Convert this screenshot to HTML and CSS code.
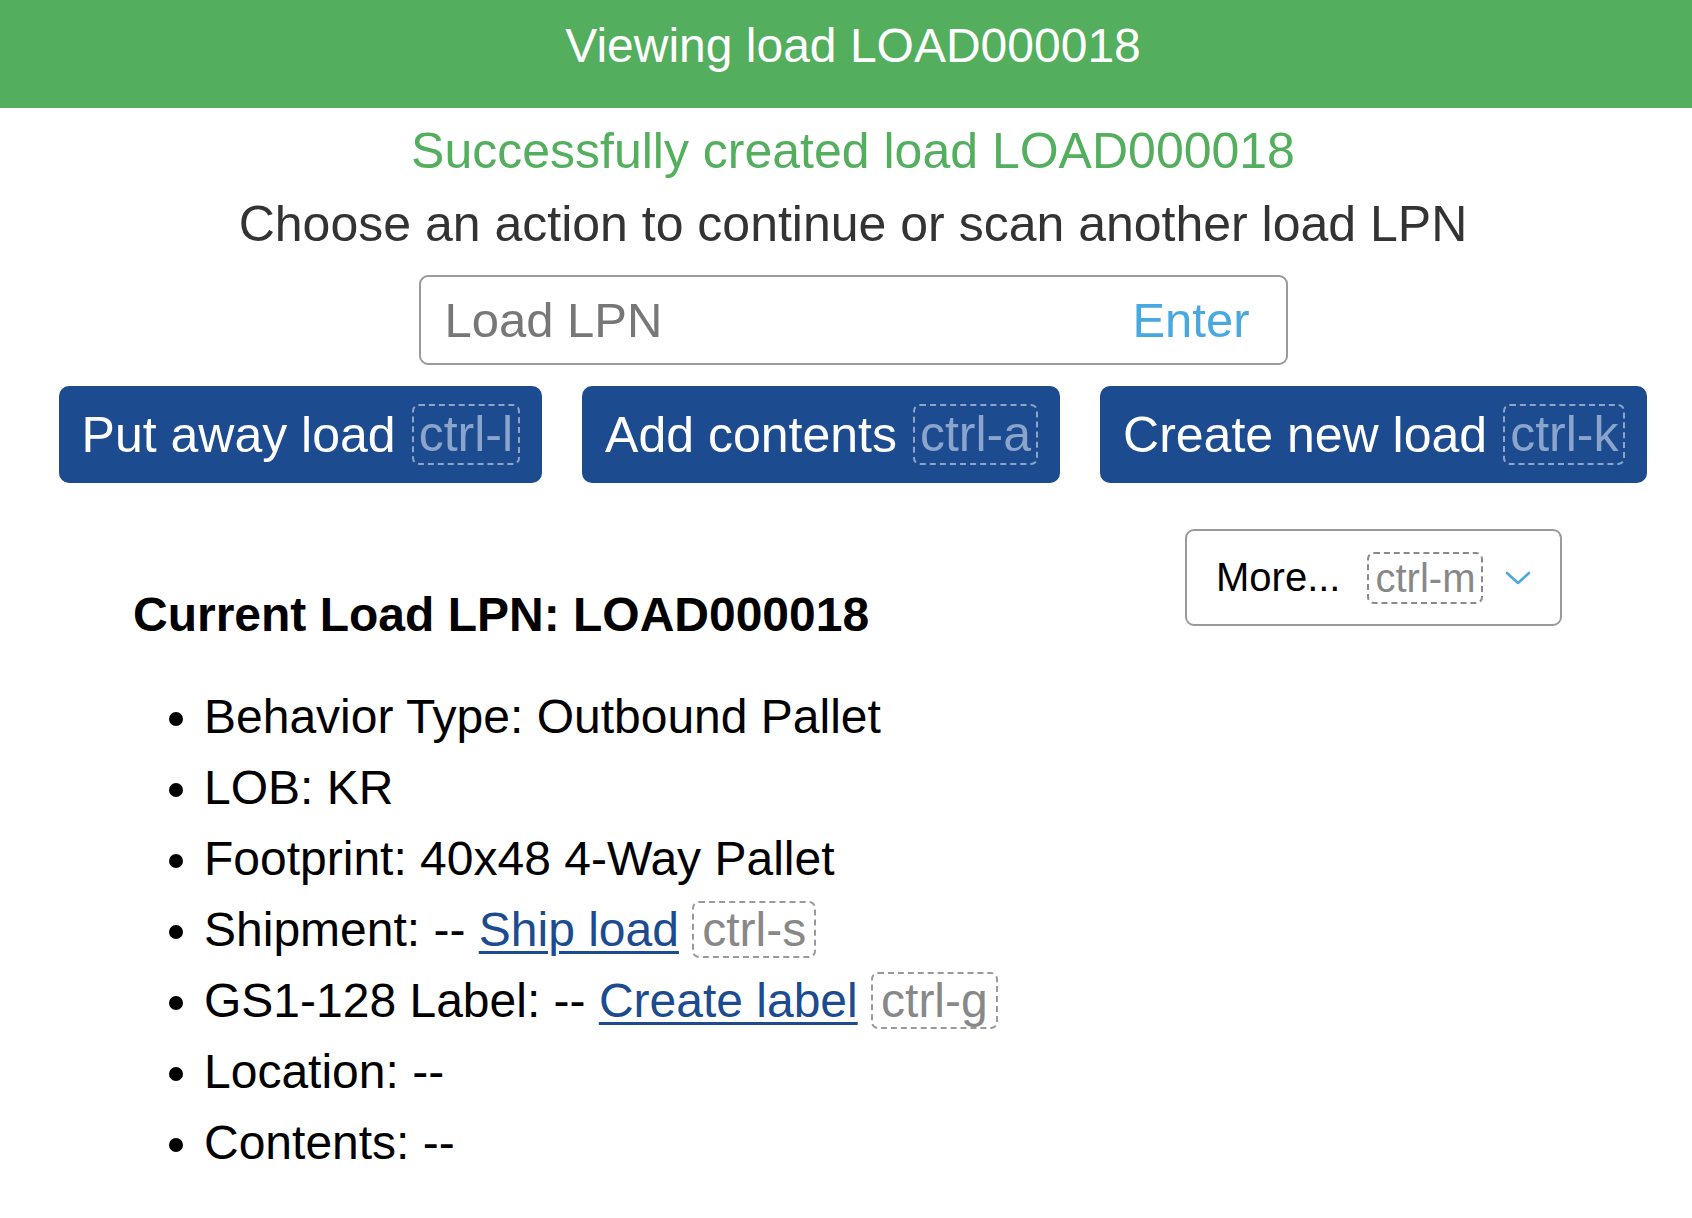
FILE: index.html
```html
<!DOCTYPE html>
<html lang="en">
<head>
<meta charset="utf-8">
<title>Viewing load LOAD000018</title>
<link rel="stylesheet" href="styles.css">
</head>
<body>
<header class="topbar">
  <h1 class="topbar-title">Viewing load LOAD000018</h1>
</header>
<main class="app">
  <section class="intro">
    <p class="success">Successfully created load LOAD000018</p>
    <p class="prompt">Choose an action to continue or scan another load LPN</p>
    <div class="scan-field">
      <span class="scan-placeholder">Load LPN</span>
      <span class="scan-enter">Enter</span>
    </div>
    <div class="actions">
      <button class="action-btn" type="button"><span>Put away load</span><kbd class="hotkey">ctrl-l</kbd></button>
      <button class="action-btn" type="button"><span>Add contents</span><kbd class="hotkey">ctrl-a</kbd></button>
      <button class="action-btn" type="button"><span>Create new load</span><kbd class="hotkey">ctrl-k</kbd></button>
    </div>
  </section>
  <section class="details">
    <div class="details-head">
      <h2 class="details-title">Current Load LPN: LOAD000018</h2>
      <div class="more">
        <span class="more-label">More...</span>
        <kbd class="more-key">ctrl-m</kbd>
        <svg class="chevron" width="26" height="16" viewBox="0 0 26 16" aria-hidden="true"><path d="M2 3 L13 13 L24 3" fill="none" stroke="#4aa8e0" stroke-width="2.6" stroke-linecap="round" stroke-linejoin="round"/></svg>
      </div>
    </div>
    <ul class="facts">
      <li>Behavior Type: Outbound Pallet</li>
      <li>LOB: KR</li>
      <li>Footprint: 40x48 4-Way Pallet</li>
      <li>Shipment: -- <a href="#" class="link">Ship load</a> <kbd class="key">ctrl-s</kbd></li>
      <li>GS1-128 Label: -- <a href="#" class="link">Create label</a> <kbd class="key">ctrl-g</kbd></li>
      <li>Location: --</li>
      <li>Contents: --</li>
    </ul>
  </section>
</main>
</body>
</html>
```

FILE: styles.css
```css
* { box-sizing: border-box; }

html, body {
  margin: 0;
  padding: 0;
  background: #ffffff;
  font-family: "Liberation Sans", Arial, Helvetica, sans-serif;
  color: #000;
}

.topbar {
  background: #53ae5d;
  height: 108px;
  padding: 17px 0 0 14px;
}

.topbar-title {
  margin: 0;
  font-size: 48px;
  font-weight: 400;
  line-height: 58px;
  color: #ffffff;
  text-align: center;
}

.intro {
  padding-left: 14px;
  display: flex;
  flex-direction: column;
  align-items: center;
}

.success {
  margin: 13px 0 0;
  font-size: 50px;
  line-height: 60px;
  color: #53ae5d;
}

.prompt {
  margin: 13px 0 0;
  font-size: 50px;
  line-height: 60px;
  color: #333333;
}

.scan-field {
  margin-top: 21px;
  width: 869px;
  height: 90px;
  border: 2px solid #9a9a9a;
  border-radius: 9px;
  display: flex;
  align-items: center;
  justify-content: space-between;
  padding: 0 36px 0 24px;
  font-size: 49px;
}

.scan-placeholder { color: #777777; }
.scan-enter { color: #4aa8e0; }

.actions {
  margin-top: 21px;
  display: flex;
  gap: 40px;
  justify-content: center;
}

.action-btn {
  height: 97px;
  border: 0;
  border-radius: 10px;
  background: #1d4b8f;
  color: #ffffff;
  font-family: inherit;
  font-size: 50px;
  padding: 0 22px 0 23px;
  display: flex;
  align-items: center;
  white-space: nowrap;
  cursor: pointer;
}

.hotkey {
  font-family: inherit;
  font-size: 50px;
  line-height: 57px;
  margin-left: 16px;
  padding: 0 5px;
  border: 2px dashed rgba(255, 255, 255, 0.5);
  border-radius: 7px;
  color: #8ba4cc;
}

.details {
  padding: 46px 130px 0 133px;
}

.details-head {
  display: flex;
  justify-content: space-between;
  align-items: flex-start;
}

.details-title {
  margin: 58px 0 0;
  font-size: 48px;
  line-height: 56px;
  font-weight: 700;
}

.more {
  flex-shrink: 0;
  width: 377px;
  height: 97px;
  border: 2px solid #9a9a9a;
  border-radius: 9px;
  display: flex;
  align-items: center;
  white-space: nowrap;
  padding: 0 20px 0 29px;
}

.more-label {
  font-size: 40px;
  color: #000;
}

.more-key {
  font-family: inherit;
  font-size: 40px;
  line-height: 48px;
  margin-left: 27px;
  padding: 0 6px;
  border: 2px dashed #8a8a8a;
  border-radius: 7px;
  color: #888888;
}

.chevron {
  flex-shrink: 0;
  margin-left: 22px;
}

.facts {
  margin: 38px 0 0;
  padding-left: 71px;
  font-size: 48px;
  line-height: 71px;
}

.link {
  color: #1d4b8f;
  text-decoration: underline;
  text-decoration-thickness: 3px;
  text-underline-offset: 5px;
}

.key {
  font-family: inherit;
  font-size: 48px;
  line-height: 56px;
  padding: 0 8px;
  border: 2px dashed #9a9a9a;
  border-radius: 7px;
  color: #888888;
}
```
